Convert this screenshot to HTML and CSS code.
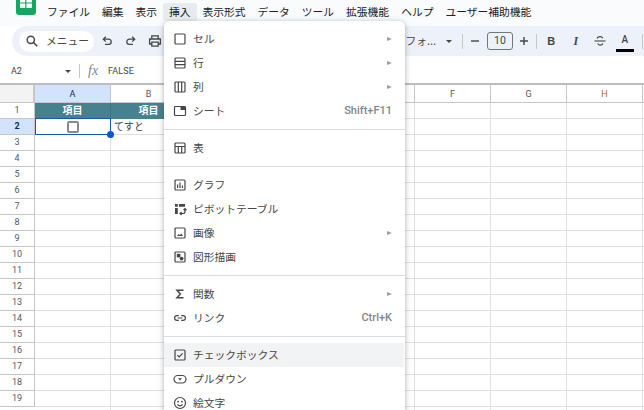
FILE: index.html
```html
<!DOCTYPE html>
<html lang="ja">
<head>
  <meta charset="UTF-8">
  <title>スプレッドシート</title>
  <link rel="stylesheet" href="styles.css">
</head>

<body>
  <div class="app">
    <div class="menubar">
      <svg class="logo" width="20" height="27" viewBox="0 0 20 27">
        <rect width="20" height="27" rx="3" fill="#11a861"/>
        <path d="M4 6h12v14H4z" fill="#fff"/>
        <path d="M4 15h12M4 11h12M9.8 8v12" stroke="#11a861" stroke-width="1.2"/>
      </svg>
      <span class="menu-title">ファイル</span>
      <span class="menu-title">編集</span>
      <span class="menu-title">表示</span>
      <span class="menu-title active">挿入</span>
      <span class="menu-title">表示形式</span>
      <span class="menu-title">データ</span>
      <span class="menu-title">ツール</span>
      <span class="menu-title">拡張機能</span>
      <span class="menu-title">ヘルプ</span>
      <span class="menu-title">ユーザー補助機能</span>
    </div>

    <div class="toolbar">
      <div class="search">
        <svg width="14" height="14" viewBox="0 0 14 14"><circle cx="5.8" cy="5.8" r="3.6" fill="none" stroke="#444746" stroke-width="1.5"/><path d="M8.5 8.5l3.8 3.8" stroke="#444746" stroke-width="1.6"/></svg>
        <span>メニュー</span>
      </div>
      <span class="tool"><svg width="12" height="12" viewBox="0 0 12 12"><path d="M3 4.2h4.6a2.6 2.6 0 0 1 0 5.2H4M4.8 1.8L2.3 4.2l2.5 2.4" fill="none" stroke="#444746" stroke-width="1.3"/></svg></span>
      <span class="tool"><svg width="12" height="12" viewBox="0 0 12 12"><path d="M9 4.2H4.4a2.6 2.6 0 0 0 0 5.2H8M7.2 1.8l2.5 2.4-2.5 2.4" fill="none" stroke="#444746" stroke-width="1.3"/></svg></span>
      <span class="tool"><svg width="14" height="14" viewBox="0 0 14 14"><path d="M3.8 5V1.8h6.4V5M3.8 10H1.6V5h10.8v5h-2.2M3.8 8.2h6.4v4H3.8z" fill="none" stroke="#444746" stroke-width="1.3"/></svg></span>

      <div class="tool-right">
        <span class="font-name">デフォ...</span>
        <span class="drop-arrow font-arrow"></span>
        <span class="tool-sep"></span>
        <span class="tool small"><svg width="10" height="10" viewBox="0 0 10 10"><path d="M1 5h8" stroke="#444746" stroke-width="1.4"/></svg></span>
        <span class="size-box">10</span>
        <span class="tool small"><svg width="10" height="10" viewBox="0 0 10 10"><path d="M1 5h8M5 1v8" stroke="#444746" stroke-width="1.4"/></svg></span>
        <span class="tool-sep"></span>
        <span class="tool fmt bold">B</span>
        <span class="tool fmt italic">I</span>
        <span class="tool fmt"><svg width="14" height="14" viewBox="0 0 14 14"><path d="M1.5 7h11" stroke="#444746" stroke-width="1.1"/><path d="M4.2 4.6c0-1.2 1.2-1.9 2.8-1.9 1.3 0 2.3.5 2.7 1.5M4.6 9.4c.4 1 1.2 1.7 2.5 1.7s2.5-.5 2.7-1.7" fill="none" stroke="#444746" stroke-width="1.2"/></svg></span>
        <span class="tool fmt text-color">A<i class="color-bar"></i></span>
        <span class="tool-sep last"></span>
      </div>
    </div>

    <div class="formula-bar">
      <span class="name-box">A2</span>
      <span class="drop-arrow"></span>
      <span class="formula-sep"></span>
      <span class="fx">fx</span>
      <span class="formula-value">FALSE</span>
    </div>

    <div class="sheet">
      <div class="col-heads">
        <div class="corner"></div>
        <div class="col-head selected">A</div>
        <div class="col-head">B</div>
        <div class="col-head">C</div>
        <div class="col-head">D</div>
        <div class="col-head">E</div>
        <div class="col-head">F</div>
        <div class="col-head">G</div>
        <div class="col-head orange">H</div>
        <div class="col-head"></div>
      </div>
      <div class="sheet-body">
        <div class="row-heads">
          <div class="row-head">1</div>
          <div class="row-head selected">2</div>
          <div class="row-head">3</div>
          <div class="row-head">4</div>
          <div class="row-head">5</div>
          <div class="row-head">6</div>
          <div class="row-head">7</div>
          <div class="row-head">8</div>
          <div class="row-head">9</div>
          <div class="row-head">10</div>
          <div class="row-head">11</div>
          <div class="row-head">12</div>
          <div class="row-head">13</div>
          <div class="row-head">14</div>
          <div class="row-head">15</div>
          <div class="row-head">16</div>
          <div class="row-head">17</div>
          <div class="row-head">18</div>
          <div class="row-head">19</div>
        </div>
        <div class="cells">
          <div class="cell title">項目</div>
          <div class="cell title">項目</div>
          <div class="cell active-cell">
            <span class="checkbox"></span>
            <span class="fill-handle"></span>
          </div>
          <div class="cell text">てすと</div>
        </div>
      </div>
    </div>

    <div class="dropdown">
      <div class="item">
        <svg class="icon" viewBox="0 0 14 14"><rect x="2" y="2" width="10" height="10" rx="1" class="line"/></svg>
        <span>セル</span><i class="sub"></i>
      </div>
      <div class="item">
        <svg class="icon" viewBox="0 0 14 14"><rect x="2" y="2" width="10" height="10" rx="1" class="line"/><path d="M2 5.3h10M2 8.7h10" class="line"/></svg>
        <span>行</span><i class="sub"></i>
      </div>
      <div class="item">
        <svg class="icon" viewBox="0 0 14 14"><rect x="2" y="2" width="10" height="10" rx="1" class="line"/><path d="M5.3 2v10M8.7 2v10" class="line"/></svg>
        <span>列</span><i class="sub"></i>
      </div>
      <div class="item">
        <svg class="icon" viewBox="0 0 14 14"><rect x="1.5" y="2.5" width="11" height="9" rx="1" class="line"/><rect x="7.5" y="2.5" width="5" height="3.5" class="solid"/></svg>
        <span>シート</span><kbd>Shift+F11</kbd>
      </div>
      <div class="divider"></div>
      <div class="item">
        <svg class="icon" viewBox="0 0 14 14"><rect x="2" y="2" width="10" height="10" rx="1" class="line"/><path d="M2 5.5h10M5.3 5.5V12M8.7 5.5V12" class="line"/></svg>
        <span>表</span>
      </div>
      <div class="divider"></div>
      <div class="item">
        <svg class="icon" viewBox="0 0 14 14"><rect x="2" y="2" width="10" height="10" rx="1" class="line"/><path d="M4.6 6.5v3.6M7 4.5v5.6M9.4 7.6v2.5" class="line"/></svg>
        <span>グラフ</span>
      </div>
      <div class="item">
        <svg class="icon" viewBox="0 0 14 14"><path d="M2 2h2.8v2.8H2zM6 2h6v2.8H6zM2 6h2.8v6H2z" class="solid"/><path d="M7 11.5h3a2 2 0 0 0 2-2V6.8M8.6 10l-1.6 1.5L8.6 13M10.5 8.2L12 6.6l1.5 1.6" class="line"/></svg>
        <span>ピボットテーブル</span>
      </div>
      <div class="item">
        <svg class="icon" viewBox="0 0 14 14"><rect x="2" y="2" width="10" height="10" rx="1" class="line"/><path d="M4 10l1.6-2 1.2 1.3L8.2 7.6 10 10z" class="solid"/></svg>
        <span>画像</span><i class="sub"></i>
      </div>
      <div class="item">
        <svg class="icon" viewBox="0 0 14 14"><rect x="2" y="2" width="10" height="10" rx="1" class="line"/><path d="M3.8 3.8h3.6v3.6H3.8z" class="solid"/><circle cx="8.6" cy="8.6" r="1.9" class="solid"/></svg>
        <span>図形描画</span>
      </div>
      <div class="divider"></div>
      <div class="item">
        <svg class="icon" viewBox="0 0 14 14"><path d="M10.5 3.2H4l3.4 3.8L4 10.8h6.5" fill="none" stroke="#444746" stroke-width="1.5"/></svg>
        <span>関数</span><i class="sub"></i>
      </div>
      <div class="item">
        <svg class="icon" viewBox="0 0 14 14"><path d="M5.8 4.6H4a2.4 2.4 0 0 0 0 4.8h1.8M8.2 4.6H10a2.4 2.4 0 0 1 0 4.8H8.2M4.6 7h4.8" class="line"/></svg>
        <span>リンク</span><kbd>Ctrl+K</kbd>
      </div>
      <div class="divider"></div>
      <div class="item hover">
        <svg class="icon" viewBox="0 0 14 14"><rect x="2" y="2" width="10" height="10" rx="1" class="line"/><path d="M4.4 7.2l1.8 1.8 3.4-3.6" class="line"/></svg>
        <span>チェックボックス</span>
      </div>
      <div class="item">
        <svg class="icon" viewBox="0 0 14 14"><rect x="1" y="3.5" width="12" height="7.5" rx="3.7" class="line"/><path d="M5 6.2h4L7 8.4z" class="solid"/></svg>
        <span>プルダウン</span>
      </div>
      <div class="item">
        <svg class="icon" viewBox="0 0 14 14"><circle cx="7" cy="7" r="5.5" class="line"/><circle cx="5.1" cy="5.7" r=".9" class="solid"/><circle cx="8.9" cy="5.7" r=".9" class="solid"/><path d="M4.5 8.4c.6 1 1.4 1.5 2.5 1.5s1.9-.5 2.5-1.5" class="line"/></svg>
        <span>絵文字</span>
      </div>
    </div>
  </div>
</body>
</html>
```

FILE: styles.css
```css
body {
  margin: 0;
  font-family: "Noto Sans CJK JP", "Noto Sans", sans-serif;
  color: #3c4043;
}
.app {
  position: relative;
  width: 644px;
  height: 410px;
  overflow: hidden;
  background: #fff;
}

/* menu bar */
.menubar {
  height: 26px;
  display: flex;
  align-items: flex-start;
  background: #f9fbfd;
  overflow: hidden;
}
.logo {
  margin: -12px 5px 0 16px;
  flex: none;
}
.menu-title {
  height: 18px;
  margin-top: 3px;
  padding: 0 6px;
  font-size: 10.75px;
  line-height: 18px;
  border-radius: 3px;
  white-space: nowrap;
  color: #202124;
}
.menu-title.active {
  background: #e8ecf1;
}

/* toolbar */
.toolbar {
  height: 30px;
  margin-left: 12px;
  display: flex;
  align-items: center;
  background: #edf2fa;
  border-radius: 15px 0 0 15px;
}
.search {
  width: 75px;
  height: 21px;
  margin-left: 7px;
  margin-right: 1px;
  box-sizing: border-box;
  padding-left: 6px;
  display: flex;
  align-items: center;
  gap: 7px;
  background: #fff;
  border-radius: 11px;
  font-size: 10.75px;
  color: #444746;
}
.search span {
  margin-bottom: 2px;
}
.tool {
  width: 24px;
  height: 20px;
  display: flex;
  align-items: center;
  justify-content: center;
  flex: none;
}
.tool.small {
  width: 20px;
}
.tool.fmt {
  width: 24.5px;
}
.tool-right {
  margin-left: auto;
  display: flex;
  align-items: center;
}
.font-name {
  font-size: 10.75px;
  color: #444746;
  white-space: nowrap;
  margin-right: 10px;
  margin-bottom: 2px;
}
.drop-arrow {
  width: 0;
  height: 0;
  border-left: 3.5px solid transparent;
  border-right: 3.5px solid transparent;
  border-top: 3.5px solid #444746;
}
.font-arrow {
  margin-right: 8px;
}
.tool-sep {
  width: 1px;
  height: 15px;
  margin: 0 2px;
  background: #c7c7c7;
  flex: none;
}
.tool-sep.last {
  margin: 0 1px 0 5px;
}
.size-box {
  width: 26px;
  height: 18px;
  margin: 0 1px 0 2px;
  box-sizing: border-box;
  border: 1px solid #747775;
  border-radius: 3px;
  font: 10.5px/16px Roboto, sans-serif;
  text-align: center;
  color: #444746;
}
.fmt {
  font: bold 11px "Liberation Sans", sans-serif;
  color: #444746;
}
.fmt.italic {
  font: italic bold 12px "Liberation Serif", serif;
}
.fmt.text-color {
  position: relative;
  font: 500 10px Roboto, sans-serif;
  padding-bottom: 4px;
}
.color-bar {
  position: absolute;
  left: 3px;
  right: 3px;
  bottom: 1px;
  height: 3px;
  background: #000;
}

/* formula bar */
.formula-bar {
  height: 27px;
  box-sizing: border-box;
  padding-top: 3px;
  display: flex;
  align-items: center;
  background: #fff;
  font-family: Roboto, sans-serif;
  font-size: 9px;
  color: #444746;
}
.name-box {
  margin-left: 11px;
  width: 54px;
}
.formula-sep {
  width: 1px;
  height: 14px;
  margin: 0 8px 0 8px;
  background: #c7c7c7;
}
.fx {
  width: 20px;
  font: italic 14px "Liberation Serif", serif;
  color: #80868b;
}
.formula-value {
  letter-spacing: 0.1px;
}

/* sheet */
.sheet {
  border-top: 2px solid #bdbdbd;
  font-family: Roboto, sans-serif;
  font-size: 9px;
}
.col-heads {
  display: flex;
  height: 18px;
  box-sizing: border-box;
  border-bottom: 1px solid #c4c7c5;
}
.corner {
  width: 35px;
  flex: none;
  box-sizing: border-box;
  background: #f3f3f3;
  border-right: 2px solid #c4c7c5;
}
.col-head {
  width: 76px;
  flex: none;
  box-sizing: border-box;
  border-right: 1px solid #c4c7c5;
  text-align: center;
  line-height: 18px;
  color: #575757;
}
.col-head.selected {
  background: #d3e3fd;
  color: #0b2d5e;
}
.col-head.orange {
  color: #a86b3c;
}
.sheet-body {
  display: flex;
}
.row-heads {
  width: 35px;
  flex: none;
}
.row-head {
  height: 16px;
  box-sizing: border-box;
  border-right: 1px solid #c4c7c5;
  border-bottom: 1px solid #c4c7c5;
  text-align: center;
  line-height: 15px;
  color: #575757;
}
.row-head.selected {
  background: #d3e3fd;
  color: #0b2d5e;
  font-weight: 700;
}
.cells {
  flex: 1;
  height: 320px;
  display: grid;
  grid-template-columns: repeat(2, 76px);
  grid-auto-rows: 16px;
  background-image:
    repeating-linear-gradient(to bottom, transparent 0 15px, #e0e0e0 15px 16px),
    repeating-linear-gradient(to right, transparent 0 75px, #e0e0e0 75px 76px);
}
.cell {
  box-sizing: border-box;
  font-family: "Noto Sans CJK JP", sans-serif;
  font-size: 10px;
  line-height: 14px;
}
.cell.title {
  background: #45818e;
  color: #fff;
  font-weight: 700;
  text-align: center;
  border-right: 1px solid #3d7380;
}
.cell.text {
  padding-left: 3px;
}
.active-cell {
  position: relative;
  margin-top: -1px;
  border: 1px solid #0b57d0;
  display: flex;
  align-items: center;
  justify-content: center;
}
.checkbox {
  width: 12px;
  height: 12px;
  box-sizing: border-box;
  border: 2px solid #8a8a8a;
  border-radius: 2px;
}
.fill-handle {
  position: absolute;
  right: -4px;
  bottom: -4px;
  width: 7px;
  height: 7px;
  background: #0b57d0;
  border-radius: 50%;
  z-index: 1;
}

/* insert menu */
.dropdown {
  position: absolute;
  left: 164px;
  top: 21px;
  width: 241px;
  height: 400px;
  box-sizing: border-box;
  padding-top: 6px;
  background: #fff;
  border-radius: 6px 6px 0 0;
  box-shadow: 0 1px 4px rgba(60, 64, 67, 0.3), 0 2px 8px rgba(60, 64, 67, 0.15);
  font-size: 10.75px;
  z-index: 2;
}
.item {
  height: 24px;
  padding: 0 13px 0 9px;
  display: flex;
  align-items: center;
  color: #444746;
}
.item span,
.item kbd {
  margin-bottom: 2px;
}
.item.hover {
  background: #f1f3f4;
  margin-right: 1px;
}
.icon {
  width: 14px;
  height: 14px;
  margin-right: 6px;
  flex: none;
}
.line {
  fill: none;
  stroke: #444746;
  stroke-width: 1.2;
}
.solid {
  fill: #444746;
}
.sub {
  margin-left: auto;
  width: 0;
  height: 0;
  border-top: 2.5px solid transparent;
  border-bottom: 2.5px solid transparent;
  border-left: 5px solid #9aa0a6;
}
kbd {
  margin-left: auto;
  font: 500 11px Roboto, sans-serif;
  color: #80868b;
}
.divider {
  height: 1px;
  margin: 6px 0;
  background: #dadce0;
}
```
